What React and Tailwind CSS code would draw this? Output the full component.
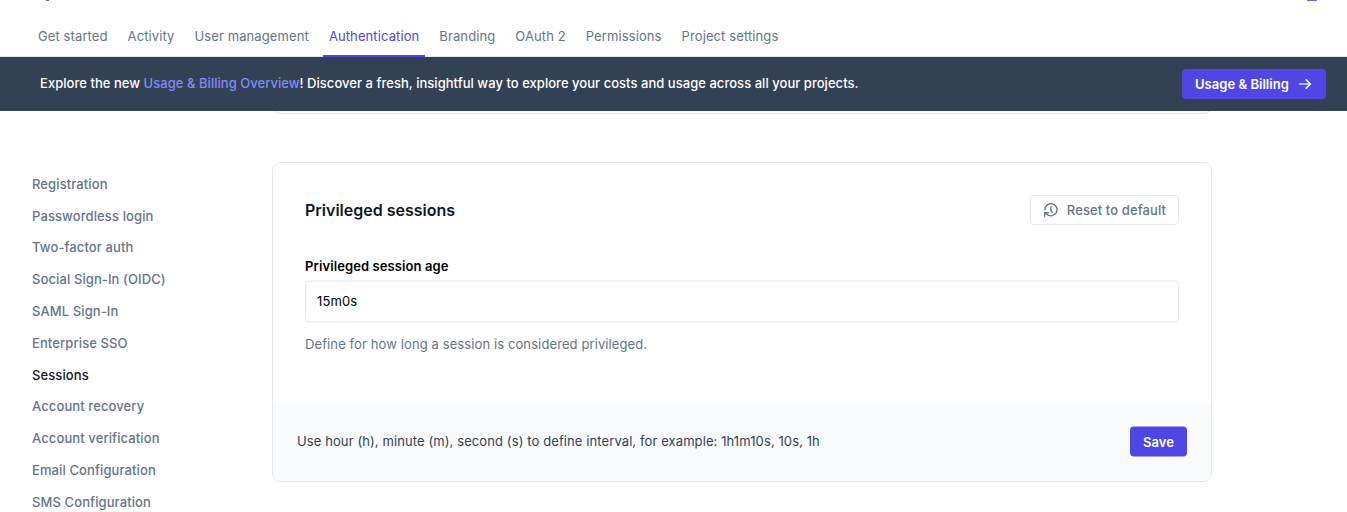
import React from "react";

const tabs = [
  "Get started",
  "Activity",
  "User management",
  "Authentication",
  "Branding",
  "OAuth 2",
  "Permissions",
  "Project settings",
];

const sections = [
  "Registration",
  "Passwordless login",
  "Two-factor auth",
  "Social Sign-In (OIDC)",
  "SAML Sign-In",
  "Enterprise SSO",
  "Sessions",
  "Account recovery",
  "Account verification",
  "Email Configuration",
  "SMS Configuration",
];

function HistoryIcon() {
  return (
    <svg className="size-4" viewBox="0 0 16 16" fill="none" stroke="currentColor" strokeWidth="1.4" strokeLinecap="round" strokeLinejoin="round">
      <path d="M1.9 7.6A6.1 6.1 0 1 1 3.6 12L2 10.8" />
      <path d="M1.7 14.2v-3.5h3.7" />
      <path d="M7.9 5v3.2l1.3 1.9" />
    </svg>
  );
}

function ArrowIcon() {
  return (
    <svg className="size-4" viewBox="0 0 16 16" fill="none" stroke="currentColor" strokeWidth="1.5" strokeLinecap="round" strokeLinejoin="round">
      <path opacity="0.8" d="M2.5 8h10.5" />
      <path d="M9.2 3.9L13.3 8l-4.1 4.1" />
    </svg>
  );
}

export default function App() {
  return (
    <div className="flex h-[512px] w-[1347px] flex-col overflow-hidden bg-white font-['Inter',sans-serif] text-[13px] leading-5 tracking-[0.105px] text-[#64748b]">
      <header className="flex h-[57px] shrink-0 flex-col justify-between border-b border-slate-200">
        <div className="flex h-px justify-between pr-[30px] pl-[46px]">
          <span className="h-px w-[3px] bg-[#6d639f]" />
          <span className="h-px w-[10px] bg-[#756df0]" />
        </div>
        <nav className="-mb-px flex h-[41px] gap-2 pl-8">
          {tabs.map((name) => (
            <a
              key={name}
              className={`flex h-full border-b-2 px-[6px] pt-[10px] whitespace-nowrap ${
                name === "Authentication" ? "border-[#4f46e5] text-[#4f46e5]" : "border-transparent"
              }`}
            >
              {name}
            </a>
          ))}
        </nav>
      </header>

      <div className="flex h-[54px] shrink-0 items-center justify-between bg-[#334155] pr-[21px] pl-10 font-medium text-white">
        <p className="-mt-[2px] tracking-[0.037px]">
          Explore the new <a className="text-[#818cf8]">Usage &amp; Billing Overview</a>! Discover a fresh, insightful way to explore your costs and usage across all your projects.
        </p>
        <button className="flex h-[30px] w-[144px] items-center justify-between rounded-[4px] bg-[#4f46e5] px-[13px] font-semibold tracking-[0.03px]">
          Usage &amp; Billing
          <ArrowIcon />
        </button>
      </div>

      <main className="flex min-h-0 flex-1">
        <aside className="w-[272px] shrink-0 pt-[62.8px] pl-8 font-medium">
          {sections.map((name) => (
            <a key={name} className={`block h-[31.8px] ${name === "Sessions" ? "text-[#0f172a]" : ""}`}>
              {name}
            </a>
          ))}
        </aside>
        <div className="w-[940px]">
          <div className="-mt-[18px] h-[21px] rounded-b-lg border border-t-0 border-slate-200 bg-slate-50 [clip-path:inset(18px_0_0_0)]" />
          <section className="mt-12 flex h-80 flex-col overflow-hidden rounded-lg border border-slate-200">
            <div className="flex-1 px-8 pt-8">
              <div className="flex h-[30px] items-center justify-between">
                <h2 className="text-base font-semibold tracking-normal text-[#0f172a]">Privileged sessions</h2>
                <button className="flex h-[30px] w-[149px] items-center justify-between rounded-[4px] border border-slate-200 px-3 font-medium">
                  <HistoryIcon />
                  Reset to default
                </button>
              </div>
              <label className="mt-[31px] block font-semibold text-black">Privileged session age</label>
              <input
                className="mt-1 block h-[42px] w-full translate-y-[0.5px] rounded-[4px] border border-slate-200 px-[11px] pb-[2px] text-black outline-none"
                defaultValue="15m0s"
              />
              <p className="mt-3">Define for how long a session is considered privileged.</p>
            </div>
            <div className="flex h-[78px] items-center justify-between bg-slate-50 px-6 text-[#334155]">
              <p className="-mt-[2px] tracking-[0.1px]">Use hour (h), minute (m), second (s) to define interval, for example: 1h1m10s, 10s, 1h</p>
              <button className="h-[30px] w-[57px] -translate-y-[0.4px] rounded-[4px] bg-[#4f46e5] font-semibold text-white">Save</button>
            </div>
          </section>
        </div>
      </main>
    </div>
  );
}
